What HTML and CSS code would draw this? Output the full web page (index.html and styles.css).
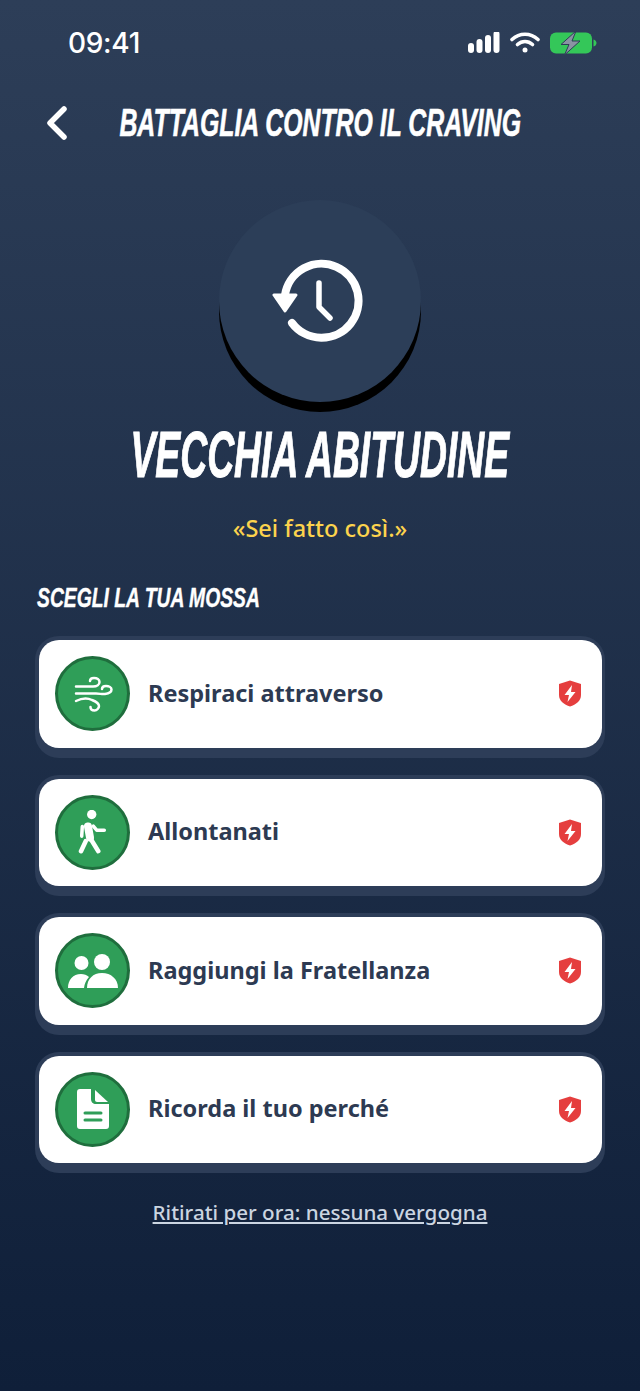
FILE: index.html
```html
<!DOCTYPE html>
<html lang="it">
<head>
    <meta charset="UTF-8">
    <meta name="viewport" content="width=device-width, initial-scale=1.0">
    <title>Battaglia contro il craving</title>
    <link rel="stylesheet" href="styles.css">
</head>
<body>
  <div class="app">
    <div class="status-bar">
      <span class="clock">09:41</span>
      <div class="status-icons">
        <svg width="32" height="22" viewBox="0 0 32 22" fill="#fff">
          <rect x="0" y="11" width="6" height="10" rx="3"/>
          <rect x="8.500" y="7" width="6" height="14" rx="3"/>
          <rect x="17" y="3" width="6" height="18" rx="3"/>
          <rect x="25.500" y="-1" width="6" height="22" rx="3"/>
        </svg>
        <svg width="30" height="22" viewBox="0 0 30 22" fill="none" stroke="#fff" stroke-width="3.600" stroke-linecap="round">
          <path d="M2 7.500C9.500 0.500 20.500 0.500 28 7.500"/>
          <path d="M7.500 12.500C12 8.500 18 8.500 22.500 12.500"/>
          <circle cx="15" cy="18" r="2.500" fill="#fff" stroke="none"/>
        </svg>
        <svg width="47" height="24" viewBox="0 -1 47 24">
          <rect x="0" y="0.500" width="42" height="21" rx="6" fill="#34c759"/>
          <path d="M43.500 7.500c2 0.500 3 2 3 3.500s-1 3-3 3.500z" fill="#34c759"/>
          <path d="M26 -1L11 12.500h8L14.500 23 30 9h-8z" fill="#8a93a3" stroke="#2d3d57" stroke-width="1"/>
        </svg>
      </div>
    </div>

    <div class="top-bar">
      <svg class="back" width="24" height="36" viewBox="0 0 24 36" fill="none" stroke="#fff" stroke-width="5.500" stroke-linecap="round" stroke-linejoin="round">
        <path d="M19 4L5 18l14 14"/>
      </svg>
      <h2 class="top-title"><span>BATTAGLIA CONTRO IL CRAVING</span></h2>
    </div>

    <div class="badge">
      <svg width="96" height="88" viewBox="0 0 96 88" fill="none" stroke="#fff" stroke-linecap="round" stroke-linejoin="round">
        <path d="M13 38A37 37 0 1 1 20 66" stroke-width="8"/>
        <path d="M2 38H24L13 54z" fill="#fff" stroke-width="3"/>
        <path d="M47 26V50L58 61" stroke-width="5.500"/>
      </svg>
    </div>

    <h1 class="title"><span>VECCHIA ABITUDINE</span></h1>
    <p class="quote">«Sei fatto così.»</p>
    <h3 class="section"><span>SCEGLI LA TUA MOSSA</span></h3>

    <div class="moves">
      <div class="move">
        <div class="move-inner">
          <div class="move-icon">
            <svg width="42" height="42" viewBox="0 0 42 42" fill="none" stroke="#fff" stroke-width="2.500" stroke-linecap="round">
              <path d="M4 13.500H21c4 0 6.500-2 6.500-4.500S25 5 22 5s-4 1.500-4 3"/>
              <path d="M4 20.500H24c4 0 6 1 9 0.500 4-0.500 6.500-2.500 6.500-4.500S37 13 34 13s-4 1-4 3"/>
              <path d="M4 28C10 25 16 25 20 27c5 2 7 4 7 6s-2 4.500-4.500 4.500-4-1.500-4-3.500"/>
            </svg>
          </div>
          <span class="move-label">Respiraci attraverso</span>
          <svg class="shield" width="24" height="27" viewBox="0 0 24 27">
            <path d="M12 0.500L23 4v11c0 6-5 9.500-11 11.500C6 24.500 1 21 1 15V4z" fill="#e53e3e"/>
            <path d="M14 5L6.500 15H11l-1.500 7L17.500 12H13z" fill="#fff"/>
          </svg>
        </div>
      </div>

      <div class="move">
        <div class="move-inner">
          <div class="move-icon">
            <svg width="30" height="44" viewBox="0 0 30 44" fill="none" stroke="#fff" stroke-linecap="round" stroke-linejoin="round">
              <circle cx="13.700" cy="4.500" r="4.700" fill="#fff" stroke="none"/>
              <path d="M10 16.500L12 27.500" stroke-width="8"/>
              <path d="M4.300 16.500L3.700 26.200" stroke-width="3.500"/>
              <path d="M15.300 16.200L18.700 20.200H26.300" stroke-width="3.500"/>
              <path d="M12 27.800L20.300 41.200" stroke-width="4.500"/>
              <path d="M7.700 31.200L3 41.200" stroke-width="4.500"/>
            </svg>
          </div>
          <span class="move-label">Allontanati</span>
          <svg class="shield" width="24" height="27" viewBox="0 0 24 27">
            <path d="M12 0.500L23 4v11c0 6-5 9.500-11 11.500C6 24.500 1 21 1 15V4z" fill="#e53e3e"/>
            <path d="M14 5L6.500 15H11l-1.500 7L17.500 12H13z" fill="#fff"/>
          </svg>
        </div>
      </div>

      <div class="move">
        <div class="move-inner">
          <div class="move-icon">
            <svg width="50" height="34" viewBox="0 0 50 34" fill="#fff">
              <circle cx="13.500" cy="9" r="7"/>
              <circle cx="34" cy="8" r="8"/>
              <path d="M0 34c0-8 5-14 13-14 3 0 6 1 8 3-3 3-4.500 7-5 11z"/>
              <path d="M19 34c0-9 6-15 15-15s16 6 16 15z"/>
            </svg>
          </div>
          <span class="move-label">Raggiungi la Fratellanza</span>
          <svg class="shield" width="24" height="27" viewBox="0 0 24 27">
            <path d="M12 0.500L23 4v11c0 6-5 9.500-11 11.500C6 24.500 1 21 1 15V4z" fill="#e53e3e"/>
            <path d="M14 5L6.500 15H11l-1.500 7L17.500 12H13z" fill="#fff"/>
          </svg>
        </div>
      </div>

      <div class="move">
        <div class="move-inner">
          <div class="move-icon">
            <svg width="32" height="40" viewBox="0 0 32 40">
              <path d="M3 0h11v10c0 3 2 5 5 5h13v22c0 2-1 3-3 3H3c-2 0-3-1-3-3V3c0-2 1-3 3-3z" fill="#fff"/>
              <path d="M18 1L31 13H20c-1 0-2-1-2-2z" fill="#fff"/>
              <path d="M8 24h16M8 31h16" stroke="#2f9e58" stroke-width="3" stroke-linecap="round"/>
            </svg>
          </div>
          <span class="move-label">Ricorda il tuo perché</span>
          <svg class="shield" width="24" height="27" viewBox="0 0 24 27">
            <path d="M12 0.500L23 4v11c0 6-5 9.500-11 11.500C6 24.500 1 21 1 15V4z" fill="#e53e3e"/>
            <path d="M14 5L6.500 15H11l-1.500 7L17.500 12H13z" fill="#fff"/>
          </svg>
        </div>
      </div>
    </div>

    <a class="retreat" href="#">Ritirati per ora: nessuna vergogna</a>
  </div>
</body>
</html>
```

FILE: styles.css
```css
body {
    margin: 0;
    padding: 0;
    font-family: 'Noto Sans', sans-serif;
    color: #fff;
}
.app {
    box-sizing: border-box;
    height: 1391px;
    padding: 0 35px;
    overflow: hidden;
    background: linear-gradient(180deg, #2d3e58 0%, #0f1f39 100%);
}
.status-bar {
    display: flex;
    justify-content: space-between;
    align-items: center;
    height: 22px;
    padding: 32px 8px 0 33px;
}
.clock {
    font-family: 'Inter', sans-serif;
    font-size: 28px;
    font-weight: 500;
    letter-spacing: -0.3px;
    color: #fff;
}
.status-icons {
    display: flex;
    align-items: center;
    gap: 10px;
}
.top-bar {
    display: flex;
    align-items: center;
    height: 60px;
    margin-top: 39px;
    padding-left: 10px;
}
.back {
    flex-shrink: 0;
}
.top-title {
    display: flex;
    justify-content: center;
    flex: 1;
    min-width: 0;
    margin: 0 34px 0 0;
    font-family: 'Liberation Sans', sans-serif;
    font-size: 39px;
    font-style: italic;
    font-weight: 700;
    white-space: nowrap;
}
.top-title span {
    flex-shrink: 0;
    transform: scaleX(0.637);
    -webkit-text-stroke: 0.6px #fff;
}
.badge {
    display: flex;
    justify-content: center;
    align-items: center;
    box-sizing: border-box;
    width: 202px;
    height: 202px;
    margin: 47px auto 0;
    border-radius: 50%;
    background: #2c3e58;
    box-shadow: 0 10px 0 #000;
}
.title {
    display: flex;
    justify-content: center;
    margin: 20px 0 0;
    font-family: 'Liberation Sans', sans-serif;
    font-size: 64px;
    line-height: 66px;
    font-style: italic;
    font-weight: 700;
    white-space: nowrap;
}
.title span {
    flex-shrink: 0;
    transform: scaleX(0.583);
    -webkit-text-stroke: 1px #fff;
}
.quote {
    margin: 25px 0 0;
    font-size: 23.500px;
    line-height: 30px;
    font-weight: 500;
    text-align: center;
    color: #fcd34d;
}
.section {
    margin: 39px 0 0 2px;
    font-family: 'Liberation Sans', sans-serif;
    font-size: 28px;
    line-height: 32px;
    font-style: italic;
    font-weight: 700;
    white-space: nowrap;
}
.section span {
    display: inline-block;
    transform: scaleX(0.69);
    transform-origin: left center;
    -webkit-text-stroke: 0.4px #fff;
}
.moves {
    display: flex;
    flex-direction: column;
    gap: 17px;
    margin-top: 22px;
}
.move {
    padding: 4px 3px 10px 4px;
    border-radius: 24px;
    background: #2d3d58;
}
.move-inner {
    display: flex;
    align-items: center;
    height: 107.500px;
    padding: 0 20px 0 16px;
    border-radius: 20px;
    background: #fff;
}
.move-icon {
    display: flex;
    justify-content: center;
    align-items: center;
    flex-shrink: 0;
    box-sizing: border-box;
    width: 75px;
    height: 75px;
    border: 3px solid #1f6e3d;
    border-radius: 50%;
    background: #2f9e58;
}
.move-label {
    flex: 1;
    margin-left: 18px;
    padding-bottom: 2px;
    font-size: 23.500px;
    font-weight: 700;
    color: #2d3a52;
}
.retreat {
    display: block;
    margin-top: 25px;
    font-size: 20.600px;
    line-height: 28px;
    font-weight: 500;
    text-align: center;
    color: #cbd5e1;
    text-decoration: underline;
}
```
